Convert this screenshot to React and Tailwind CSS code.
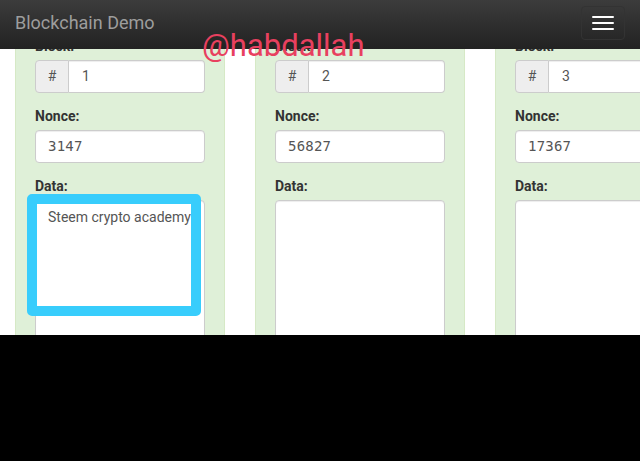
import React from "react";

const font = { fontFamily: "Roboto, 'Liberation Sans', sans-serif" };

function Card({ block, nonce, data }) {
  return (
    <div className="w-[210px] shrink-0 bg-[#dff0d8] border border-[#d6e9c6] rounded-[4px] px-[19px] pt-[19px] pb-[20px]">
      <div className="text-[14px] leading-[20px] font-bold text-[#333] mb-[4px]">Block:</div>
      <div className="flex h-[33px] w-[170px]">
        <div className="w-[34px] flex items-center justify-center bg-[#eee] border border-[#ccc] rounded-l-[4px] text-[14px] text-[#555]">#</div>
        <div className="flex-1 flex items-center bg-white border border-l-0 border-[#ccc] rounded-r-[4px] pl-[13px] text-[14px] text-[#555] shadow-[inset_0_1px_1px_rgba(0,0,0,0.075)]">
          {block}
        </div>
      </div>
      <div className="mt-[13px] text-[14px] leading-[20px] font-bold text-[#333] mb-[4px]">Nonce:</div>
      <div
        className="h-[33px] w-[170px] flex items-center bg-white border border-[#ccc] rounded-[4px] pl-[12px] text-[14px] text-[#555] shadow-[inset_0_1px_1px_rgba(0,0,0,0.075)]"
        style={{ fontFamily: "'DejaVu Sans Mono', monospace", letterSpacing: "0.2px" }}
      >
        {nonce}
      </div>
      <div className="mt-[13px] text-[14px] leading-[20px] font-bold text-[#333] mb-[4px]">Data:</div>
      <div className="h-[160px] w-[170px] bg-white border border-[#ccc] rounded-[4px] px-[12px] py-[6px] text-[14px] leading-[20px] text-[#555] shadow-[inset_0_1px_1px_rgba(0,0,0,0.075)] whitespace-nowrap overflow-hidden">
        {data}
      </div>
    </div>
  );
}

export default function App() {
  return (
    <div className="w-[640px] h-[461px] overflow-hidden bg-black relative" style={font}>
      <div className="h-[49px] bg-gradient-to-b from-[#3c3c3c] to-[#222] flex items-center justify-between pl-[15px] pr-[15px] relative z-10">
        <div className="text-[18px] text-[#9d9d9d] -mt-[4px]">Blockchain Demo</div>
        <div className="w-[44px] h-[34px] border border-[#333] rounded-[4px] flex flex-col items-center justify-center gap-[4px] -mt-[4px]">
          <div className="w-[22px] h-[2px] bg-white rounded-[1px]" />
          <div className="w-[22px] h-[2px] bg-white rounded-[1px]" />
          <div className="w-[22px] h-[2px] bg-white rounded-[1px]" />
        </div>
      </div>
      <div className="h-[286px] bg-white overflow-hidden">
        <div className="flex gap-[30px] pl-[15px] -mt-[33px]">
          <Card block="1" nonce="3147" data="Steem crypto academy" />
          <Card block="2" nonce="56827" data="" />
          <Card block="3" nonce="17367" data="" />
        </div>
      </div>
      <div className="absolute left-[27px] top-[194px] w-[174px] h-[122px] border-[10px] border-[#38cdfc] rounded-[5px]" />
      <div className="absolute left-[202px] top-[27px] z-20 text-[31px] leading-[38px] text-[#e8405f]" style={font}>
        @habdallah
      </div>
    </div>
  );
}
